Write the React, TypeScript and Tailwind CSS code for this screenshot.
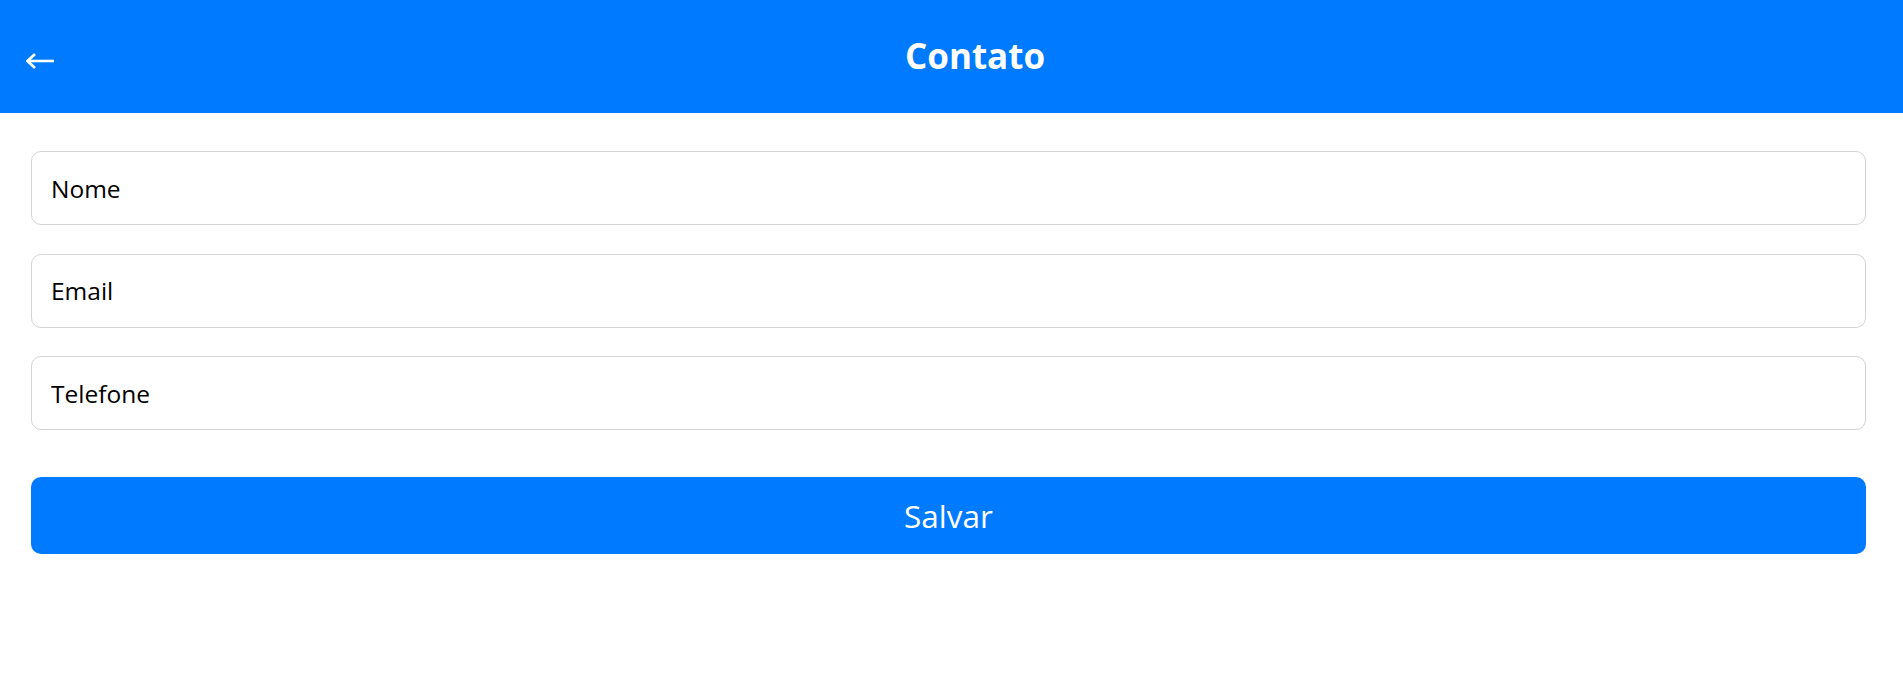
import { useState } from "react";

const fields = [
  { name: "nome", label: "Nome", type: "text" },
  { name: "email", label: "Email", type: "email" },
  { name: "telefone", label: "Telefone", type: "tel" },
];

function BackArrow() {
  return (
    <svg width="28" height="16" viewBox="0 0 28 16" fill="none" aria-hidden>
      <path d="M1.5 8H28" stroke="white" strokeWidth="2.6" />
      <path d="M9 1L1.5 8L9 15" stroke="white" strokeWidth="2.6" strokeLinejoin="miter" />
    </svg>
  );
}

export default function App() {
  const [values, setValues] = useState<Record<string, string>>({});

  return (
    <div className="min-h-[683px] bg-white font-['Open_Sans',sans-serif]">
      <header className="flex h-[113px] items-center bg-[#007bff] pl-[26px] pr-[7px]">
        <button type="button" aria-label="Voltar" className="mt-[9px] flex items-center">
          <BackArrow />
        </button>
        <h1 className="flex-1 text-center text-[35px] font-bold text-white">Contato</h1>
      </header>

      <form
        className="flex flex-col pl-[31px] pr-[37px] pt-[38px]"
        onSubmit={(e) => e.preventDefault()}
      >
        <div className="flex flex-col gap-[28.5px]">
          {fields.map((f) => (
            <input
              key={f.name}
              type={f.type}
              placeholder={f.label}
              value={values[f.name] ?? ""}
              onChange={(e) => setValues((v) => ({ ...v, [f.name]: e.target.value }))}
              className="h-[74px] w-full rounded-[10px] border border-[#d4d4d4] px-[19px] text-[24.5px] text-black outline-none placeholder:text-black focus:border-[#80bdff]"
            />
          ))}
        </div>
        <button
          type="submit"
          className="mt-[47px] h-[77px] w-full rounded-[10px] bg-[#007bff] text-[31.5px] text-white"
        >
          Salvar
        </button>
      </form>
    </div>
  );
}
